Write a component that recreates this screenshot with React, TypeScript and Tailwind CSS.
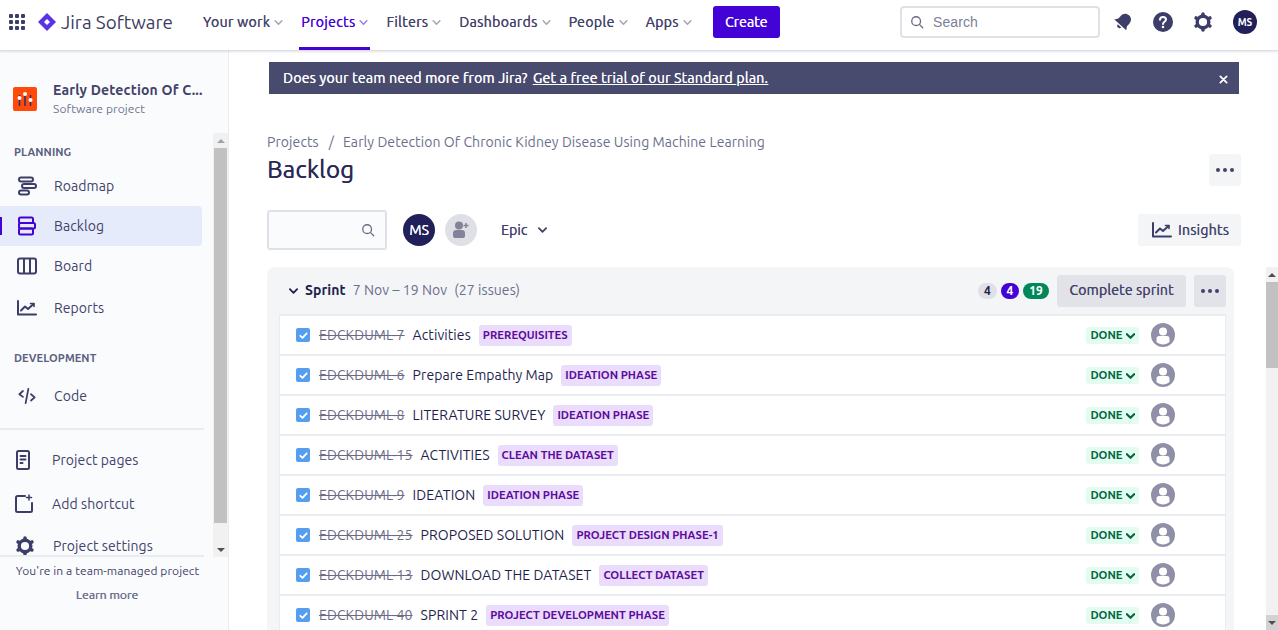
import React from "react";

const font = { fontFamily: '"Ubuntu","Noto Sans","Open Sans",sans-serif' };
const med = "[text-shadow:0.35px_0_0_currentColor]";

function Chevron({ className = "", w = 1.8 }: { className?: string; w?: number }) {
  return (
    <svg viewBox="0 0 10 6" className={className} fill="none" stroke="currentColor" strokeWidth={w} strokeLinecap="round" strokeLinejoin="round">
      <path d="M1 1l4 4 4-4" />
    </svg>
  );
}

function NavItem({ label, active }: { label: string; active?: boolean }) {
  return (
    <div className={`relative flex h-[50px] items-center px-[2px] pb-[6px] text-[14px] tracking-[0.4px] ${med} ${active ? "text-[#4303d6]" : "text-[#42426b]"}`}>
      <span>{label}</span>
      <Chevron className={`ml-[4px] mt-[1px] h-[5px] w-[9px] ${active ? "text-[#9a7fe0]" : "text-[#a3a3b8]"}`} />
      {active && <div className="absolute bottom-0 left-0 right-0 h-[3px] bg-[#4303d6]" />}
    </div>
  );
}

function TrendIcon({ className = "" }: { className?: string }) {
  return (
    <svg viewBox="0 0 20 16" className={className} fill="none" stroke="currentColor" strokeWidth="2" strokeLinecap="round" strokeLinejoin="round">
      <path d="M1 1v13.500h18" />
      <path d="M4 10.500l4-4 3 2.500 5.500-5" />
      <path d="M13.500 3.500h3.500v3" strokeWidth="1.600" />
    </svg>
  );
}

function SideItem({ icon, label, active, h = "h-10" }: { icon: React.ReactNode; label: string; active?: boolean; h?: string }) {
  return (
    <div className={`relative flex ${h} w-[202px] items-center rounded-r-[4px] pl-[15px] text-[14px] text-[#42426b] ${active ? "bg-[#e6ebfb]" : ""}`}>
      {active && <div className="absolute left-0 top-[11px] h-[18px] w-[2px] bg-[#4303d6]" />}
      <div className={`flex h-5 w-[23px] items-center justify-center ${active ? "text-[#4303d6]" : "text-[#3d3d69]"}`}>{icon}</div>
      <span className="ml-[16px]">{label}</span>
    </div>
  );
}

const GearIcon = ({ className = "" }: { className?: string }) => (
  <svg viewBox="0 0 20 20" className={className} fill="none">
    <circle cx="10" cy="10" r="5.800" stroke="currentColor" strokeWidth="3.400" />
    <path d="M10 2v1M10 17v1M3.100 6l.9.500M16 13.500l.9.500M3.100 14l.9-.500M16 6.500l.9-.500" stroke="currentColor" strokeWidth="3.600" strokeLinecap="round" />
  </svg>
);

const rows = [
  { key: "EDCKDUML-7", title: "Activities", epic: "PREREQUISITES" },
  { key: "EDCKDUML-6", title: "Prepare Empathy Map", epic: "IDEATION PHASE" },
  { key: "EDCKDUML-8", title: "LITERATURE SURVEY", epic: "IDEATION PHASE" },
  { key: "EDCKDUML-15", title: "ACTIVITIES", epic: "CLEAN THE DATASET" },
  { key: "EDCKDUML-9", title: "IDEATION", epic: "IDEATION PHASE" },
  { key: "EDCKDUML-25", title: "PROPOSED SOLUTION", epic: "PROJECT DESIGN PHASE-1" },
  { key: "EDCKDUML-13", title: "DOWNLOAD THE DATASET", epic: "COLLECT DATASET" },
  { key: "EDCKDUML-40", title: "SPRINT 2", epic: "PROJECT DEVELOPMENT PHASE" },
];

function Row({ r }: { r: (typeof rows)[number] }) {
  return (
    <div className="flex h-10 shrink-0 items-center border-b-2 border-[#ebecf0] bg-white pl-[16px] pr-[50px] text-[14px]">
      <div className="flex h-[14px] w-[14px] items-center justify-center rounded-[2px] bg-[#559dee]">
        <svg viewBox="0 0 12 12" className="h-[11px] w-[11px]" fill="none" stroke="white" strokeWidth="2" strokeLinecap="round" strokeLinejoin="round">
          <path d="M2.500 6.300l2.400 2.400 4.600-5" />
        </svg>
      </div>
      <span className="ml-[9px] text-[#6b6b85] line-through">{r.key}</span>
      <span className="ml-[8px] text-[#1f1f4d]">{r.title}</span>
      <span className="ml-[8px] flex h-[21px] items-center rounded-[3px] bg-[#eadcfb] px-[4px] text-[11.25px] font-bold tracking-normal text-[#5e0a9e]">{r.epic}</span>
      <div className="ml-auto flex h-[17px] w-[53px] items-center justify-center rounded-[3px] bg-[#e3fcef] text-[11.25px] font-bold tracking-normal text-[#006644]">
        DONE
        <Chevron className="ml-[3px] mt-[1px] h-[6px] w-[9px]" w={2.400} />
      </div>
      <div className="ml-[12px] h-6 w-6">
        <svg viewBox="0 0 24 24" className="h-6 w-6">
          <circle cx="12" cy="12" r="12" fill="#8f8fa8" />
          <circle cx="12" cy="8.500" r="4" fill="white" />
          <path d="M5.500 15.500c0-1.400 1-2.500 2.500-2.500h8c1.500 0 2.500 1.100 2.500 2.500V19c-1.700 1.600-4 2.500-6.500 2.500S7.200 20.600 5.500 19z" fill="white" />
        </svg>
      </div>
    </div>
  );
}

function SideScroll() {
  return (
    <div className="flex h-full w-[15px] shrink-0 flex-col bg-[#f1f1f1]">
      <div className="flex h-[15px] items-center justify-center"><div className="h-0 w-0 border-x-[4px] border-b-[4px] border-x-transparent border-b-[#a3a3a3]" /></div>
      <div className="mx-[1px] h-[375px] bg-[#c1c1c1]" />
      <div className="flex-1" />
      <div className="flex h-[15px] items-center justify-center"><div className="h-0 w-0 border-x-[4px] border-t-[4px] border-x-transparent border-t-[#505050]" /></div>
    </div>
  );
}

export default function App() {
  return (
    <div style={font} className="flex h-[630px] w-[1278px] flex-col overflow-hidden bg-white tracking-[0.08px]">
      <header className="relative z-10 flex h-[51px] shrink-0 items-center border-b border-[#dfdfe8] bg-white pb-[6px] pl-[9px] pr-[21px] shadow-[0_1px_2px_rgba(9,30,66,0.12)]">
        <div className="grid h-4 w-4 grid-cols-3 gap-[2px]">
          {Array.from({ length: 9 }).map((_, i) => <div key={i} className="rounded-[1px] bg-[#3d3d69]" />)}
        </div>
        <svg viewBox="0 0 18 18" className="ml-[13px] h-[18px] w-[18px]">
          <path d="M9 0l9 9-9 9-9-9z" fill="#5b32e5" />
          <path d="M9 6l3 3-3 3-3-3z" fill="white" />
        </svg>
        <span className="ml-[5px] text-[18.800px] tracking-normal text-[#3d3d5f]">Jira Software</span>
        <div className="ml-[28px] flex h-[50px] gap-[14px] self-start">
          <NavItem label="Your work" />
          <NavItem label="Projects" active />
          <NavItem label="Filters" />
          <NavItem label="Dashboards" />
          <NavItem label="People" />
          <NavItem label="Apps" />
        </div>
        <div className={`ml-[19px] flex h-8 w-[67px] items-center justify-center rounded-[3px] bg-[#4303d6] text-[14px] text-white ${med}`}>Create</div>
        <div className="ml-auto flex h-8 w-[200px] items-center rounded-[4px] border-2 border-[#dfe1e6] pl-[8px] text-[14px] text-[#7a7f99]" style={{ fontFamily: '"Liberation Sans",sans-serif' }}>
          <svg viewBox="0 0 16 16" className="h-[14px] w-[14px]" fill="none" stroke="#6b6b85" strokeWidth="1.500" strokeLinecap="round"><circle cx="7" cy="7" r="5" /><path d="M11 11l3.500 3.500" /></svg>
          <span className="ml-[9px]">Search</span>
        </div>
        <svg viewBox="0 0 20 20" className="ml-[13px] h-5 w-5" fill="#3d3d69">
          <g transform="rotate(42 10 10)">
            <path d="M10 1c3.600 0 5.800 2.600 5.800 6v3.500L18 14H2l2.200-3.500V7c0-3.400 2.200-6 5.800-6z" />
            <path d="M7.600 15.200h4.800c-.2 1.500-1.200 2.300-2.400 2.300s-2.200-.8-2.400-2.300z" />
          </g>
        </svg>
        <svg viewBox="0 0 20 20" className="ml-[20px] h-5 w-5">
          <circle cx="10" cy="10" r="10" fill="#3d3d69" />
          <path d="M7 7.800C7 6 8.300 5 10 5s3 1 3 2.600c0 2.200-3 2.200-3 4.400" fill="none" stroke="white" strokeWidth="2" strokeLinecap="round" />
          <circle cx="10" cy="15" r="1.300" fill="white" />
        </svg>
        <GearIcon className="ml-[20px] h-5 w-5 text-[#3d3d69]" />
        <div className="ml-[20px] flex h-6 w-6 items-center justify-center rounded-full bg-[#21205a] text-[10px] font-bold text-white">MS</div>
      </header>

      <div className="flex min-h-0 flex-1">
        <aside className="flex w-[229px] shrink-0 flex-col border-r border-[#ebecf0] bg-[#fafbfd]">
          <div className="flex h-[82px] shrink-0 items-center pl-[13px] pt-[14px]">
            <div className="flex h-6 w-6 items-center justify-center rounded-[2px] bg-[#ff4a0a]">
              <svg viewBox="0 0 24 24" className="h-6 w-6">
                <path d="M6.500 8v11M12 5v14M17.500 8v11" stroke="#24317a" strokeWidth="1.500" />
                <circle cx="6.500" cy="11" r="2" fill="white" />
                <circle cx="12" cy="7" r="2" fill="white" />
                <circle cx="17.500" cy="13" r="2" fill="white" />
              </svg>
            </div>
            <div className="ml-[16px]">
              <div className="text-[14px] font-bold leading-[18px] tracking-[0.2px] text-[#42426b]">Early Detection Of C...</div>
              <div className="pt-[1px] text-[12px] leading-[18px] tracking-[0.1px] text-[#6f7290]">Software project</div>
            </div>
          </div>
          <div className="flex h-[424px] shrink-0 overflow-hidden">
            <div className="w-[213px] shrink-0 overflow-hidden">
              <div className="pl-[14px] pt-[12px] text-[11px] font-bold leading-[14px] text-[#5b5f80]">PLANNING</div>
              <div className="mt-[7px]">
                <SideItem label="Roadmap" icon={
                  <svg viewBox="0 0 20 20" className="h-5 w-5" fill="none" stroke="currentColor" strokeWidth="2"><rect x="2" y="1.500" width="14" height="4" rx="2" /><rect x="5" y="8" width="14" height="4" rx="2" /><rect x="2" y="14.500" width="10" height="4" rx="2" /></svg>
                } />
                <SideItem label="Backlog" active icon={
                  <svg viewBox="0 0 20 20" className="h-5 w-5" fill="none" stroke="currentColor" strokeWidth="2"><rect x="2" y="1.500" width="14" height="5.500" rx="1.500" /><rect x="2" y="7" width="16" height="5.500" rx="1.500" /><rect x="2" y="12.500" width="14" height="6" rx="1.500" /></svg>
                } />
                <SideItem label="Board" icon={
                  <svg viewBox="0 0 20 20" className="h-5 w-5" fill="none" stroke="currentColor" strokeWidth="2"><rect x="1" y="2.500" width="18" height="15" rx="2" /><path d="M7 2.500v15M13 2.500v15" /></svg>
                } />
                <SideItem label="Reports" h="h-[44px]" icon={<TrendIcon className="h-[16px] w-5" />} />
              </div>
              <div className="pl-[14px] pt-[21px] text-[11px] font-bold leading-[14px] text-[#5b5f80]">DEVELOPMENT</div>
              <div className="mt-[11px]">
                <SideItem label="Code" icon={
                  <svg viewBox="0 0 20 20" className="h-[18px] w-[18px]" fill="none" stroke="currentColor" strokeWidth="2" strokeLinecap="round" strokeLinejoin="round"><path d="M5.500 4.500L1.500 8l4 3M14.500 8l4 3.500-4 3.500M11.500 2l-3 16" /></svg>
                } />
              </div>
              <div className="mt-[12px] h-[2px] w-[204px] bg-[#ebecf0]" />
              <div className="mt-[20px] flex h-[20px] items-center pl-[14px] text-[14px] text-[#42426b]">
                <svg viewBox="0 0 20 20" className="h-5 w-5 text-[#3d3d69]" fill="none" stroke="currentColor" strokeWidth="2" strokeLinecap="round"><rect x="3" y="1" width="12" height="18" rx="1.500" /><path d="M6.500 6h5M6.500 9.500h5M6.500 13h2" /></svg>
                <span className="ml-[18px]">Project pages</span>
              </div>
              <div className="mt-[24px] flex h-[20px] items-center pl-[14px] text-[14px] text-[#42426b]">
                <svg viewBox="0 0 20 20" className="h-5 w-5 text-[#3d3d69]" fill="none" stroke="currentColor" strokeWidth="2" strokeLinecap="round"><path d="M11 2H3.500C2.700 2 2 2.700 2 3.500v13c0 .8.700 1.500 1.500 1.500h13c.8 0 1.500-.7 1.500-1.500V9" /><path d="M15 1v5M12.500 3.500h5" strokeWidth="1.500" /></svg>
                <span className="ml-[18px]">Add shortcut</span>
              </div>
              <div className="mt-[22px] flex h-[20px] items-center pl-[15px] text-[14px] text-[#42426b]">
                <GearIcon className="h-5 w-5 text-[#3d3d69]" />
                <span className="ml-[18px]">Project settings</span>
              </div>
            </div>
            <SideScroll />
          </div>
          <div className="-mt-[2px] h-[2px] w-[204px] bg-[#ebecf0]" />
          <div className="w-[215px] pt-[5px] text-center text-[12px] leading-[18px] text-[#42426b]">You're in a team-managed project</div>
          <div className={`w-[214px] pt-[6px] text-center text-[12px] leading-[18px] text-[#6b6f8c] ${med}`}>Learn more</div>
        </aside>

        <main className="flex min-w-0 flex-1 flex-col">
          <div className={`ml-[40px] mr-[39px] mt-[11px] flex h-8 shrink-0 items-center justify-between bg-[#484a6e] pl-[14px] pr-[11px] text-[14px] tracking-[0.25px] text-white ${med}`}>
            <span>Does your team need more from Jira? <span className="ml-[2px] underline">Get a free trial of our Standard plan.</span></span>
            <svg viewBox="0 0 10 10" className="mt-[2px] h-[9px] w-[9px]" fill="none" stroke="white" strokeWidth="2" strokeLinecap="round"><path d="M1.500 1.500l7 7M8.500 1.500l-7 7" /></svg>
          </div>
          <div className="ml-[38px] mr-[37px] mt-[38px] flex shrink-0 items-center text-[14px] leading-5 text-[#6b6f8c]">
            <span>Projects</span><span className="ml-[10px] mr-[9px]">/</span><span>Early Detection Of Chronic Kidney Disease Using Machine Learning</span>
          </div>
          <div className="ml-[38px] mr-[37px] mt-[2px] flex h-8 shrink-0 items-center justify-between">
            <h1 className="text-[24px] leading-8 tracking-[0.3px] text-[#2a2a55] [text-shadow:0.5px_0_0_currentColor]">Backlog</h1>
            <div className="flex h-8 w-8 items-center justify-center gap-[3px] rounded-[3px] bg-[#f4f5f7]">
              {[0, 1, 2].map((i) => <div key={i} className="h-[4px] w-[4px] rounded-full bg-[#42426b]" />)}
            </div>
          </div>
          <div className="ml-[38px] mr-[37px] mt-[24px] flex h-10 shrink-0 items-center">
            <div className="flex h-10 w-[120px] items-center justify-end rounded-[3px] border-2 border-[#dfe1e6] bg-[#fafbfd] pr-[10px]">
              <svg viewBox="0 0 16 16" className="h-[14px] w-[14px]" fill="none" stroke="#6b6b85" strokeWidth="1.500" strokeLinecap="round"><circle cx="7" cy="7" r="5" /><path d="M11 11l3.500 3.500" /></svg>
            </div>
            <div className={`ml-[16px] flex h-8 w-8 items-center justify-center rounded-full bg-[#21205a] text-[14px] text-white ${med}`}>MS</div>
            <div className="ml-[10px] flex h-8 w-8 items-center justify-center rounded-full bg-[#dfdfe6]">
              <svg viewBox="0 0 20 20" className="h-5 w-5" fill="#82829b">
                <circle cx="8" cy="5.500" r="4" />
                <path d="M2 13c0-1.700 1.300-3 3-3h6c1.700 0 3 1.300 3 3v3c0 1.100-.9 2-2 2H4c-1.100 0-2-.9-2-2z" />
                <path d="M15 3v5M12.500 5.500h5" stroke="#82829b" strokeWidth="1.500" />
              </svg>
            </div>
            <span className={`ml-[24px] text-[14px] text-[#42426b] ${med}`}>Epic</span>
            <Chevron className="ml-[11px] h-[6px] w-[9px] text-[#42426b]" w={2} />
            <div className={`ml-auto flex h-8 w-[103px] items-center justify-center rounded-[3px] bg-[#f4f5f7] pl-[2px] text-[14px] text-[#42426b] ${med}`}>
              <TrendIcon className="h-[16px] w-5 text-[#3d3d69]" />
              <span className="ml-[6px] tracking-[0.3px]">Insights</span>
            </div>
          </div>
          <div className="mt-[17px] flex min-h-0 flex-1">
            <div className="ml-[38px] flex w-[967px] shrink-0 flex-col overflow-hidden rounded-t-[8px] bg-[#f4f5f7]">
              <div className="flex h-[47px] shrink-0 items-center pl-[22px] pr-[8px] text-[14px]">
                <Chevron className="h-[6px] w-[9px] text-[#1f1f4d]" w={2} />
                <span className="ml-[7px] font-bold text-[#1f1f4d]">Sprint</span>
                <span className="ml-[7px] text-[#6b6f8c]">7 Nov – 19 Nov</span>
                <span className="ml-[7px] text-[#6b6f8c]">(27 issues)</span>
                <div className="ml-auto flex items-center">
                  <span className="flex h-4 w-[19px] items-center justify-center rounded-full bg-[#dfe1e6] text-[12px] font-bold leading-4 text-[#1f1f4d]">4</span>
                  <span className="ml-[4px] flex h-4 w-[18px] items-center justify-center rounded-full bg-[#4303d6] text-[12px] font-bold leading-4 text-white">4</span>
                  <span className="ml-[4px] flex h-4 w-[26px] items-center justify-center rounded-full bg-[#00875a] text-[12px] font-bold leading-4 text-white">19</span>
                </div>
                <div className={`ml-[8px] flex h-8 w-[129px] items-center justify-center rounded-[3px] bg-[#e2e2e9] tracking-[0.2px] text-[#42426b] ${med}`}>Complete sprint</div>
                <div className="ml-[8px] flex h-8 w-8 items-center justify-center gap-[3px] rounded-[3px] bg-[#e2e2e9]">
                  {[0, 1, 2].map((i) => <div key={i} className="h-[4px] w-[4px] rounded-full bg-[#42426b]" />)}
                </div>
              </div>
              <div className="ml-[12px] mr-[8px] flex flex-col border-x border-t-2 border-[#ebecf0]">
                {rows.map((r) => <Row key={r.key} r={r} />)}
              </div>
            </div>
            <div className="ml-auto flex w-[12px] flex-col bg-[#f1f1f1]">
              <div className="flex h-[15px] shrink-0 items-center justify-center"><div className="h-0 w-0 border-x-[4px] border-b-[4px] border-x-transparent border-b-[#505050]" /></div>
              <div className="h-[86px] shrink-0 bg-[#c1c1c1]" />
              <div className="flex-1" />
              <div className="flex h-[15px] shrink-0 items-center justify-center bg-[#d2d2d2]"><div className="h-0 w-0 border-x-[4px] border-t-[4px] border-x-transparent border-t-[#505050]" /></div>
            </div>
          </div>
        </main>
      </div>
    </div>
  );
}
